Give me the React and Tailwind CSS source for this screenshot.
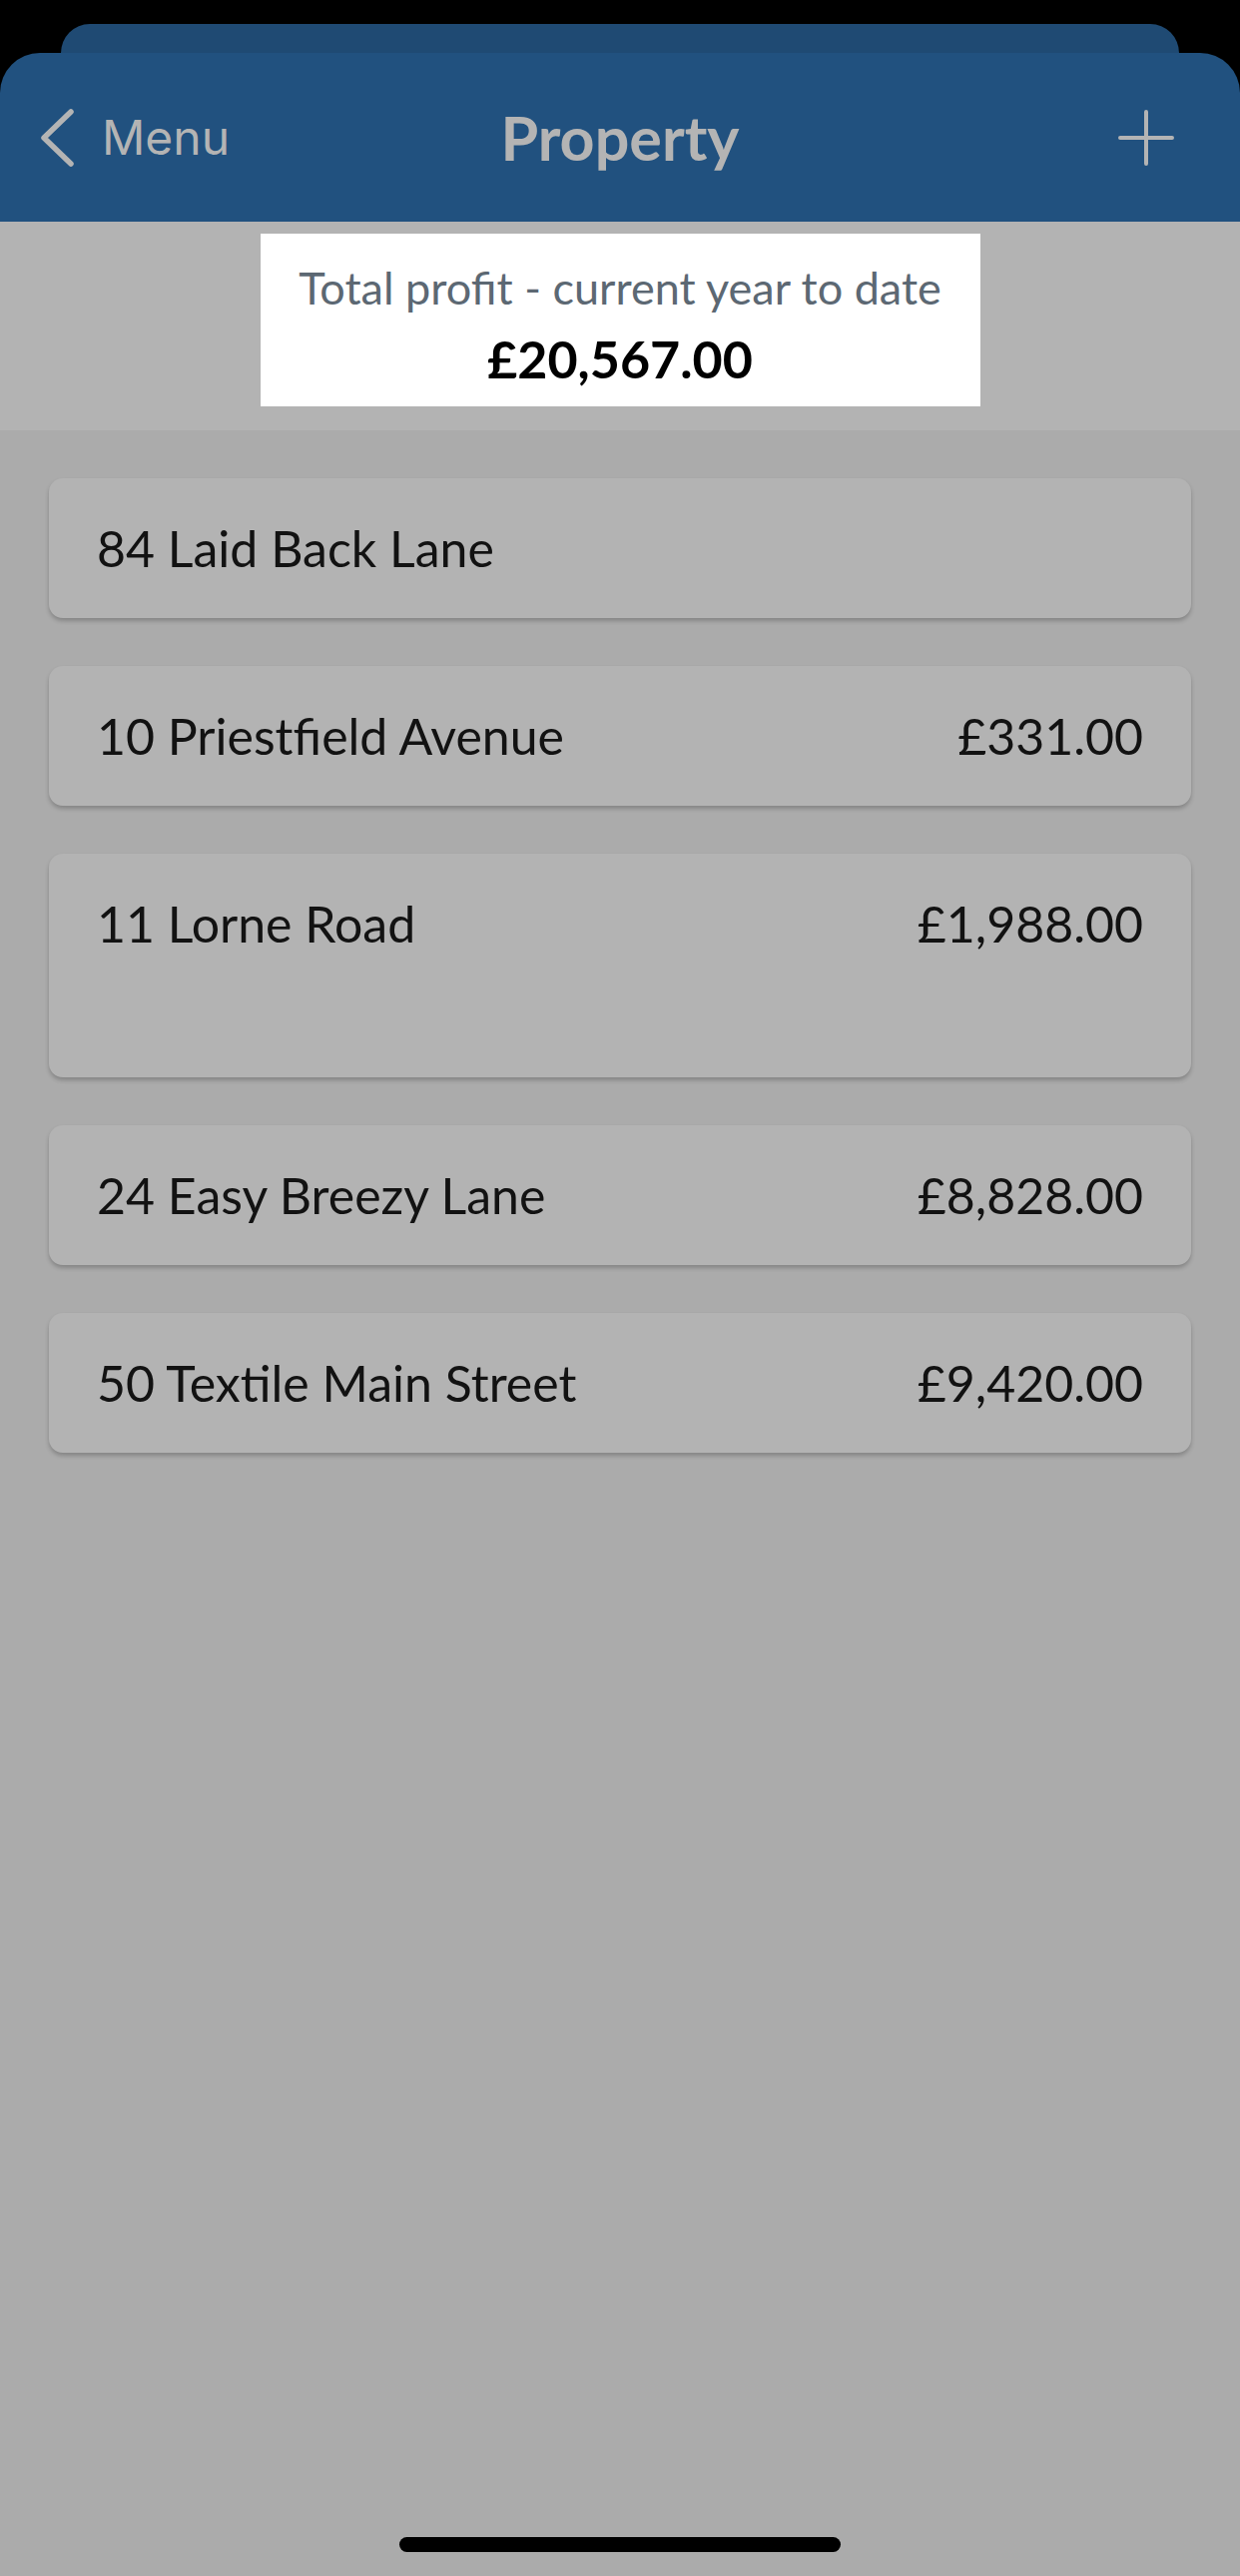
const properties = [
  { name: "84 Laid Back Lane", amount: "" },
  { name: "10 Priestfield Avenue", amount: "£331.00" },
  { name: "11 Lorne Road", amount: "£1,988.00", tall: true },
  { name: "24 Easy Breezy Lane", amount: "£8,828.00" },
  { name: "50 Textile Main Street", amount: "£9,420.00" },
];

const PropertyCard = ({ name, amount, tall }) => {
  return (
    <div
      className={
        tall
          ? "h-[224px] rounded-[14px] bg-[#b3b3b3] shadow-[0_3px_4px_rgba(0,0,0,0.22)] px-[48px] pt-[44px] flex justify-between items-start"
          : "h-[140px] rounded-[14px] bg-[#b3b3b3] shadow-[0_3px_4px_rgba(0,0,0,0.22)] px-[48px] flex justify-between items-center"
      }
    >
      <span className="text-[50px] leading-[52px] text-[#121212]">{name}</span>
      <span className="text-[50px] leading-[52px] text-[#121212]">{amount}</span>
    </div>
  );
};

export default function App() {
  return (
    <div
      className="w-[1242px] h-[2580px] bg-black flex flex-col overflow-hidden"
      style={{ fontFamily: "Lato, 'Noto Sans', sans-serif" }}
    >
      {/* sheet behind */}
      <div className="mt-[24px] mx-[61px] h-[29px] rounded-t-[30px] bg-[#1f4a73]"></div>

      <div className="flex-1 flex flex-col rounded-t-[40px] overflow-hidden">
        {/* nav bar */}
        <div className="h-[169px] bg-[#21517f] flex items-center justify-between px-[40px] relative">
          <div className="flex items-center gap-[26px]">
            <svg width="36" height="58" viewBox="0 0 36 58" fill="none">
              <path d="M31 3 L4 29 L31 55" stroke="#b4b4b4" strokeWidth="5.5" strokeLinecap="round" strokeLinejoin="round" />
            </svg>
            <span
              className="text-[48px] text-[#b4b4b4] leading-none"
              style={{ fontFamily: "Inter, 'Liberation Sans', sans-serif" }}
            >
              Menu
            </span>
          </div>
          <span className="absolute left-1/2 -translate-x-1/2 text-[61px] font-bold text-[#b4b4b4] leading-none">
            Property
          </span>
          <svg width="56" height="56" viewBox="0 0 56 56" fill="none" className="mr-[26px]">
            <path d="M28 2 V54 M2 28 H54" stroke="#b4b4b4" strokeWidth="4" strokeLinecap="round" />
          </svg>
        </div>

        {/* summary */}
        <div className="bg-[#b3b3b3] pt-[12px] pb-[24px]">
          <div className="w-[721px] h-[173px] mx-auto bg-white flex flex-col items-center pt-[30px]">
            <span className="text-[45px] leading-[48px] text-[#5c6873]">Total profit - current year to date</span>
            <span className="text-[52px] leading-[56px] mt-[19px] font-bold text-black">£20,567.00</span>
          </div>
        </div>

        {/* list */}
        <div className="flex-1 bg-[#ababab] px-[49px] pt-[48px] flex flex-col gap-[48px]">
          {properties.map((p) => (
            <PropertyCard key={p.name} {...p} />
          ))}
          <div className="mt-auto mb-[24px] mx-auto w-[442px] h-[15px] rounded-full bg-black"></div>
        </div>
      </div>
    </div>
  );
}
